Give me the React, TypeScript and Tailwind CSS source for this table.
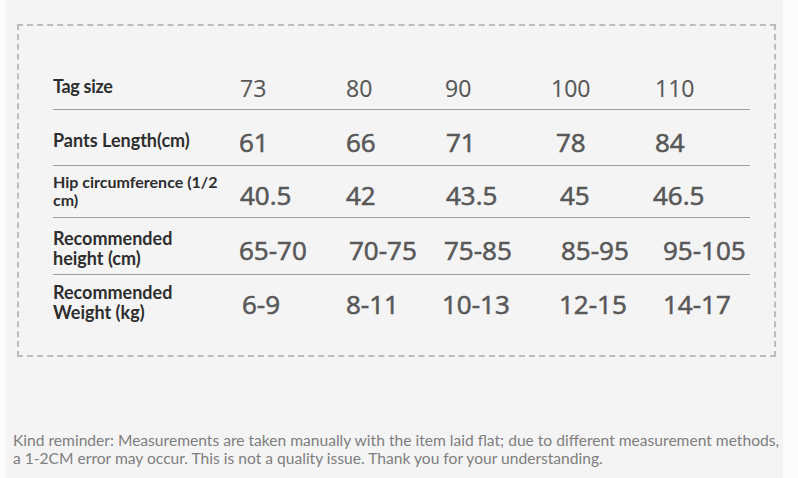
import React from 'react';

type Cell = { v: string; cls: string };
type Row = {
  label: React.ReactNode;
  labelCls: string;
  rowCls: string;
  numCls: string;
  cells: Cell[];
};

const rows: Row[] = [
  {
    label: 'Tag size',
    labelCls: 'text-[18px] leading-[20px] pt-[12px] tracking-[-0.3px]',
    rowCls: 'h-[46px] border-b border-[#9e9e9e]',
    numCls: 'text-[23px] pt-[13px] [-webkit-text-stroke:0.15px_#585858]',
    cells: [
      { v: '73', cls: '' },
      { v: '80', cls: '' },
      { v: '90', cls: '' },
      { v: '100', cls: '-ml-[2px]' },
      { v: '110', cls: '-ml-[2px]' },
    ],
  },
  {
    label: 'Pants Length(cm)',
    labelCls: 'text-[18px] leading-[20px] pt-[20px]',
    rowCls: 'h-[56px] border-b border-[#9e9e9e]',
    numCls: 'text-[26px] pt-[19px] [-webkit-text-stroke:0.6px_#585858]',
    cells: [
      { v: '61', cls: '-ml-[1px]' },
      { v: '66', cls: '' },
      { v: '71', cls: 'ml-[1px]' },
      { v: '78', cls: 'ml-[3px]' },
      { v: '84', cls: '-ml-[2px]' },
    ],
  },
  {
    label: (
      <>
        Hip circumference (1/2
        <br />
        cm)
      </>
    ),
    labelCls: 'text-[16px] leading-[18px] pt-[7px]',
    rowCls: 'h-[52px] border-b border-[#9e9e9e]',
    numCls: 'text-[26px] pt-[16px] [-webkit-text-stroke:0.6px_#585858]',
    cells: [
      { v: '40.5', cls: '' },
      { v: '42', cls: '' },
      { v: '43.5', cls: 'ml-[1px]' },
      { v: '45', cls: 'ml-[7px]' },
      { v: '46.5', cls: '-ml-[4px]' },
    ],
  },
  {
    label: (
      <>
        Recommended
        <br />
        height (cm)
      </>
    ),
    labelCls: 'text-[18px] leading-[20px] pt-[10px]',
    rowCls: 'h-[57px] border-b border-[#9e9e9e]',
    numCls: 'text-[26px] pt-[19px] [-webkit-text-stroke:0.6px_#585858]',
    cells: [
      { v: '65-70', cls: '-ml-[1px]' },
      { v: '70-75', cls: 'ml-[3px]' },
      { v: '75-85', cls: '-ml-[1px]' },
      { v: '85-95', cls: 'ml-[8px]' },
      { v: '95-105', cls: 'ml-[6px]' },
    ],
  },
  {
    label: (
      <>
        Recommended
        <br />
        Weight (kg)
      </>
    ),
    labelCls: 'text-[18px] leading-[20px] pt-[7px]',
    rowCls: 'h-[55px]',
    numCls: 'text-[26px] pt-[16px] [-webkit-text-stroke:0.6px_#585858]',
    cells: [
      { v: '6-9', cls: 'ml-[2px]' },
      { v: '8-11', cls: '' },
      { v: '10-13', cls: '-ml-[3px]' },
      { v: '12-15', cls: 'ml-[6px]' },
      { v: '14-17', cls: 'ml-[6px]' },
    ],
  },
];

export default function App() {
  return (
    <div className="flex h-[478px] w-[798px] bg-[#fbfbfb]">
      <div className="ml-[6px] flex h-full w-[777px] flex-col bg-[#f4f4f4] pl-[11px] pt-[24px]">
        {/* Dashed frame with the size table */}
        <div className="h-[333px] w-[759px] border-2 border-dashed border-[#bdbdbd] pl-[34px] pt-[38px]">
          <div className="w-[697px]">
            {rows.map((row, i) => (
              <div
                key={i}
                className={`grid grid-cols-[187px_106px_99px_108px_104px_1fr] items-start ${row.rowCls}`}
              >
                <div
                  className={`font-['Lato',sans-serif] font-bold text-[#2e2e2e] ${row.labelCls}`}
                >
                  {row.label}
                </div>
                {row.cells.map((c, j) => (
                  <div
                    key={j}
                    className={`whitespace-nowrap font-['Open_Sans',sans-serif] font-normal leading-none text-[#585858] ${row.numCls} ${c.cls}`}
                  >
                    {c.v}
                  </div>
                ))}
              </div>
            ))}
          </div>
        </div>

        <p className="-ml-[4px] mt-[74px] whitespace-nowrap font-['Lato',sans-serif] text-[15.6px] leading-[18px] text-[#7e7e7e]">
          Kind reminder: Measurements are taken manually with the item laid flat; due to different measurement methods,
          <br />
          a 1-2CM error may occur. This is not a quality issue. Thank you for your understanding.
        </p>
      </div>
    </div>
  );
}
